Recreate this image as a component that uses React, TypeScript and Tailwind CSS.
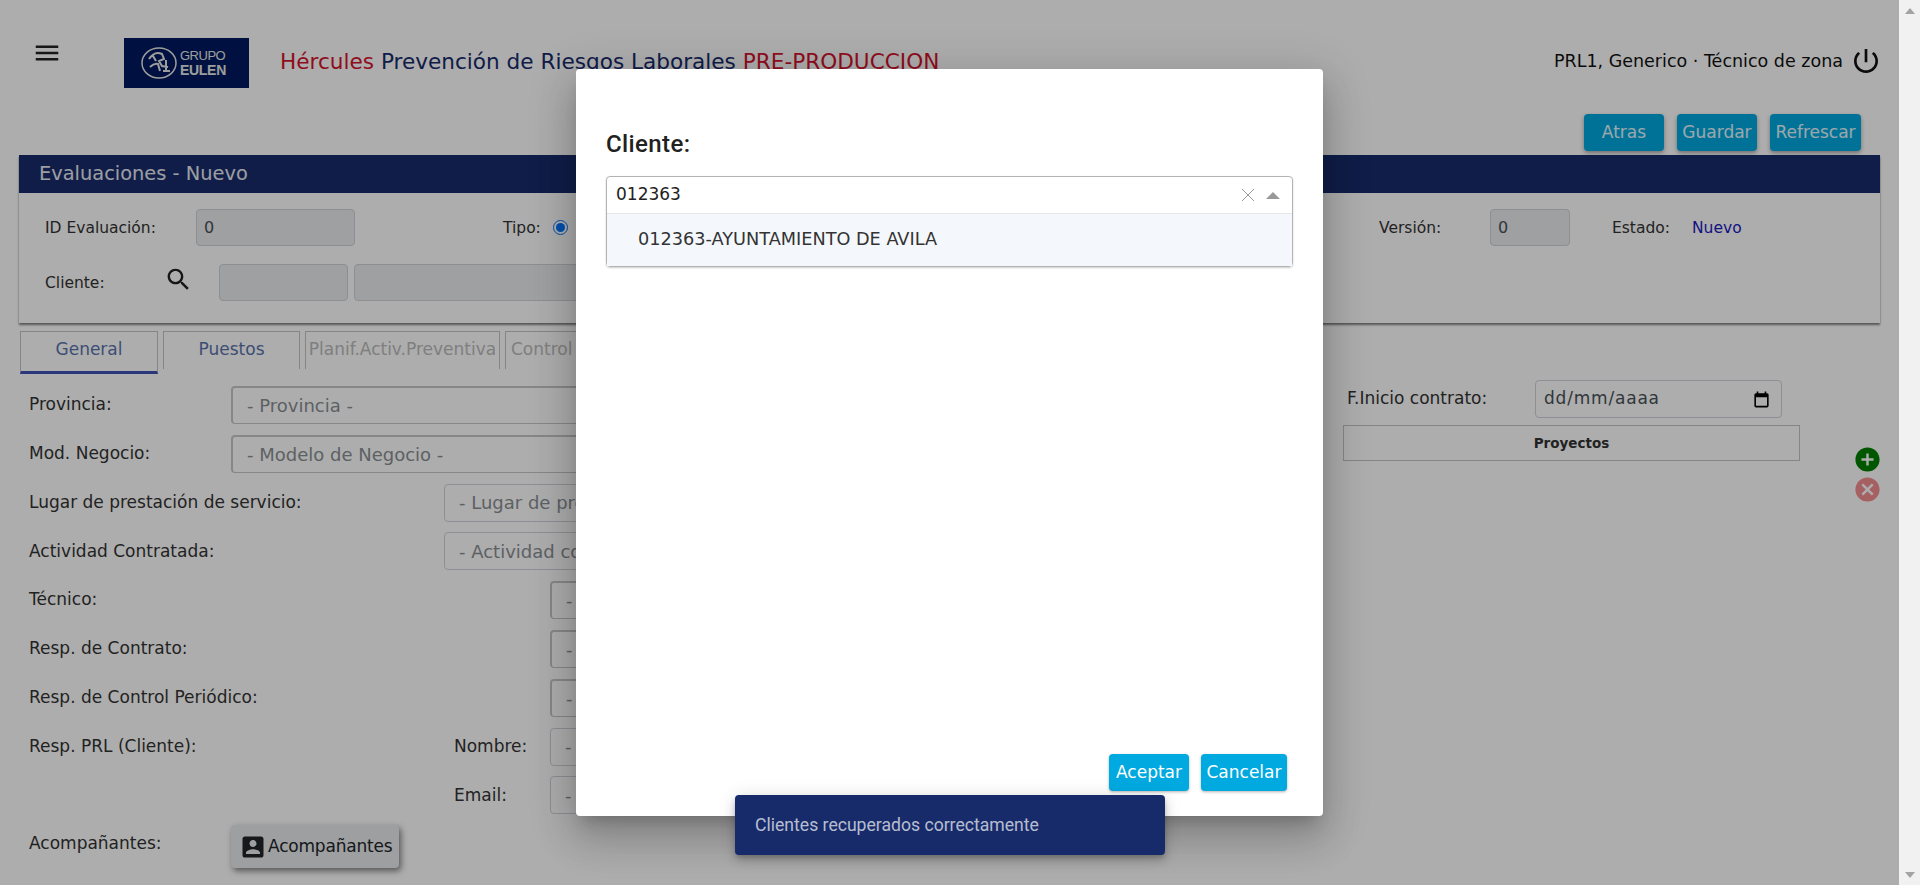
const ui = { fontFamily: '"DejaVu Sans", sans-serif' };

function Icon({ d, className }: { d: string; className?: string }) {
  return (
    <svg viewBox="0 0 24 24" fill="currentColor" className={className}>
      <path d={d} />
    </svg>
  );
}

const icons = {
  menu: "M3 18h18v-2H3v2zm0-5h18v-2H3v2zm0-7v2h18V6H3z",
  search:
    "M15.5 14h-.79l-.28-.27C15.41 12.59 16 11.11 16 9.5 16 5.91 13.09 3 9.5 3S3 5.91 3 9.5 5.91 16 9.5 16c1.61 0 3.09-.59 4.23-1.57l.27.28v.79l5 4.99L20.49 19l-4.99-5zm-6 0C7.01 14 5 11.99 5 9.5S7.01 5 9.5 5 14 7.01 14 9.5 11.99 14 9.5 14z",
  person:
    "M3 5v14c0 1.1.89 2 2 2h14c1.1 0 2-.9 2-2V5c0-1.1-.9-2-2-2H5c-1.11 0-2 .9-2 2zm12 4c0 1.66-1.34 3-3 3s-3-1.34-3-3 1.34-3 3-3 3 1.34 3 3zm-9 8c0-2 4-3.1 6-3.1s6 1.1 6 3.1v1H6v-1z",
  power:
    "M13 3h-2v10h2V3zm4.83 2.17l-1.42 1.42C17.99 7.86 19 9.81 19 12c0 3.87-3.13 7-7 7s-7-3.13-7-7c0-2.19 1.01-4.14 2.58-5.42L6.17 5.17C4.23 6.82 3 9.26 3 12c0 4.97 4.03 9 9 9s9-4.03 9-9c0-2.74-1.23-5.18-3.17-6.83z",
  add: "M12 2C6.48 2 2 6.48 2 12s4.48 10 10 10 10-4.48 10-10S17.52 2 12 2zm5 11h-4v4h-2v-4H7v-2h4V7h2v4h4v2z",
  cancel:
    "M12 2C6.47 2 2 6.47 2 12s4.47 10 10 10 10-4.47 10-10S17.53 2 12 2zm5 13.59L15.59 17 12 13.41 8.41 17 7 15.59 10.59 12 7 8.41 8.41 7 12 10.59 15.59 7 17 8.41 13.41 12 17 15.59z",
  calendar:
    "M19 4h-1V2h-2v2H8V2H6v2H5c-1.1 0-2 .9-2 2v14c0 1.1.9 2 2 2h14c1.1 0 2-.9 2-2V6c0-1.1-.9-2-2-2zm0 16H5V9h14v11z",
};

function Logo() {
  return (
    <div className="w-[125px] h-[50px] bg-[#001a60] flex items-center pl-[17px] gap-[3px] text-[#e8e8e8]">
      <svg viewBox="0 0 36 32" className="w-[36px] h-[32px]" fill="none" stroke="currentColor">
        <ellipse cx="18" cy="16" rx="17" ry="15" strokeWidth="1.5" />
        <path d="M8 12c4-6 9-7 13-5l2 5-5 2 3 5 6 1M9 20c3-3 5-4 8-3l2 7M12 9l3 5M25 13v10M22 24h7" strokeWidth="2" />
      </svg>
      <div className="flex flex-col leading-[14px]" style={{ fontFamily: '"Liberation Sans", sans-serif' }}>
        <span className="text-[13px] tracking-[-0.5px]">GRUPO</span>
        <span className="text-[14px] font-bold tracking-[-0.3px]">EULEN</span>
      </div>
    </div>
  );
}

function TopButton({ label, width }: { label: string; width: string }) {
  return (
    <button className={`${width} h-[37px] rounded bg-[#00a9e0] text-white/90 text-[17px] shadow-[0_2px_4px_rgba(0,0,0,0.35)]`}>
      {label}
    </button>
  );
}

function ReadOnly({ value, className }: { value?: string; className: string }) {
  return (
    <div className={`${className} h-[37px] shrink-0 flex items-center px-[7px] rounded bg-[#e9ecef] border border-[#ced4da] text-[#495057] text-[16px]`}>
      {value}
    </div>
  );
}

function Tab({ label, className, active, disabled }: { label: string; className: string; active?: boolean; disabled?: boolean }) {
  return (
    <div
      className={`${className} flex justify-center pt-[5px] overflow-hidden whitespace-nowrap border-x border-t border-[#c4c4c4] text-[17px] ${
        active ? "border-b-[3px] border-b-[#3f51b5] h-[43px] text-[#5a73ad]" : disabled ? "text-[#bbbbbb] h-[38px]" : "text-[#5a73ad] h-[38px]"
      }`}
    >
      {label}
    </div>
  );
}

function Row({ label, labelWidth, placeholder, inner, thick }: { label: string; labelWidth: string; placeholder: string; inner?: string; thick?: boolean }) {
  return (
    <div className="flex h-[38px] items-center">
      <span className={`${labelWidth} shrink-0 flex justify-between`}>
        <span>{label}</span>
        {inner && <span className="w-[96px]">{inner}</span>}
      </span>
      <div className={`w-[700px] h-full flex items-center rounded border px-[14px] text-[18px] text-[#8a8f94] ${thick ? "border-[#c8c8cc] border-t-2 border-l-2" : "border-[#ced4da]"}`}>{placeholder}</div>
    </div>
  );
}

export default function App() {
  return (
    <div className="flex h-screen overflow-hidden bg-[#f1f1f1]" style={ui}>
      <div className="relative flex-1 min-w-0 bg-white text-[#212529] text-[17px] overflow-hidden">
        {/* header */}
        <div className="flex items-start pt-[38px] pr-[17px] h-[114px]">
          <Icon d={icons.menu} className="w-[30px] h-[30px] ml-[32px] text-[#222]" />
          <div className="ml-[62px]">
            <Logo />
          </div>
          <div className="ml-[31px] mt-[8px] text-[21.6px] text-[#172b6b] whitespace-nowrap">
            <span className="text-[#d5132d]">Hércules</span> Prevención de Riesgos Laborales{" "}
            <span className="text-[#d5132d]">PRE-PRODUCCION</span>
          </div>
          <div className="ml-auto flex items-center mt-[7px] text-[17.5px] text-[#111]">
            <span>PRL1, Generico · Técnico de zona</span>
            <Icon d={icons.power} className="w-[32px] h-[32px] ml-[7px]" />
          </div>
        </div>

        {/* acciones */}
        <div className="flex justify-end gap-[13px] pr-[38px] h-[41px]">
          <TopButton label="Atras" width="w-[80px]" />
          <TopButton label="Guardar" width="w-[80px]" />
          <TopButton label="Refrescar" width="w-[91px]" />
        </div>

        {/* cabecera de evaluacion */}
        <div className="mx-[19px] shadow-[0_2px_2px_rgba(0,0,0,0.5)]">
          <div className="h-[38px] bg-[#172b6b] text-white/90 text-[19.4px] flex items-center pl-[20px]">Evaluaciones - Nuevo</div>
          <div className="h-[130px] pt-[16px] pl-[26px] flex flex-col gap-[18px] text-[#333] text-[15.5px]">
            <div className="flex items-center">
              <span className="w-[151px] pt-[2px]">ID Evaluación:</span>
              <ReadOnly value="0" className="w-[159px]" />
              <span className="ml-[148px] w-[50px] pt-[2px]">Tipo:</span>
              <input type="radio" defaultChecked className="w-[15px] h-[15px] accent-[#0075ff]" />
              <span className="ml-auto w-[111px] pt-[2px]">Versión:</span>
              <ReadOnly value="0" className="w-[80px]" />
              <span className="ml-[42px] w-[80px] pt-[2px]">Estado:</span>
              <span className="text-[#1a1ac0] mr-[139px] w-[49px] pt-[2px]">Nuevo</span>
            </div>
            <div className="flex items-center">
              <span className="w-[119px] pt-[2px]">Cliente:</span>
              <Icon d={icons.search} className="w-[29px] h-[29px] -mt-[6px] text-[#222]" />
              <ReadOnly className="ml-[26px] w-[129px]" />
              <ReadOnly className="ml-[6px] w-[600px]" />
            </div>
          </div>
        </div>

        {/* pestañas */}
        <div className="flex items-start gap-[5px] mt-[8px] ml-[20px] h-[47px]">
          <Tab label="General" className="w-[138px]" active />
          <Tab label="Puestos" className="w-[137px]" />
          <Tab label="Planif.Activ.Preventiva" className="w-[195px]" disabled />
          <Tab label="Control" className="w-[120px] justify-start pl-[5px]" disabled />
        </div>

        {/* formulario */}
        <div className="flex mt-[8px] text-[#333]">
          <div className="ml-[29px] w-[1280px] shrink-0 flex flex-col gap-[10.8px]">
            <Row label="Provincia:" labelWidth="w-[202px]" placeholder="- Provincia -" thick />
            <Row label="Mod. Negocio:" labelWidth="w-[202px]" placeholder="- Modelo de Negocio -" thick />
            <Row label="Lugar de prestación de servicio:" labelWidth="w-[415px]" placeholder="- Lugar de prestación -" />
            <Row label="Actividad Contratada:" labelWidth="w-[415px]" placeholder="- Actividad contratada -" />
            <Row label="Técnico:" labelWidth="w-[521px]" placeholder="-" thick />
            <Row label="Resp. de Contrato:" labelWidth="w-[521px]" placeholder="-" thick />
            <Row label="Resp. de Control Periódico:" labelWidth="w-[521px]" placeholder="-" thick />
            <Row label="Resp. PRL (Cliente):" labelWidth="w-[521px]" placeholder="-" inner="Nombre:" />
            <Row label="" labelWidth="w-[521px]" placeholder="-" inner="Email:" />
            <div className="flex items-center h-[38px]">
              <span className="w-[202px]">Acompañantes:</span>
              <button className="w-[168px] h-[43px] mt-[5px] flex items-center pl-[10px] bg-[#e9eaec] text-[#212529] shadow-[2px_3px_6px_rgba(0,0,0,0.5)] rounded-sm">
                <Icon d={icons.person} className="w-[28px] h-[28px] -ml-[2px]" />
                <span className="ml-[1px] -tracking-[0.2px]">Acompañantes</span>
              </button>
            </div>
          </div>
          <div className="ml-[34px] w-[457px] shrink-0 -mt-[6px]">
            <div className="flex items-center h-[38px] pl-[4px]">
              <span className="w-[188px]">F.Inicio contrato:</span>
              <div className="w-[247px] h-full rounded border border-[#ced4da] flex items-center justify-between pl-[8px] pr-[10px] text-[#495057]">
                <span className="tracking-[0.8px]">dd/mm/aaaa</span>
                <Icon d={icons.calendar} className="w-[19px] h-[19px] text-black" />
              </div>
            </div>
            <div className="mt-[7px] h-[36px] border border-[#c4c4c4] flex items-center justify-center text-[13.5px] font-bold">Proyectos</div>
          </div>
          <div className="ml-[55px] pt-[61px] flex flex-col gap-[5px] shrink-0">
            <Icon d={icons.add} className="w-[29px] h-[29px] -m-[2px] text-[#008000]" />
            <Icon d={icons.cancel} className="w-[29px] h-[29px] -m-[2px] text-[#f4908f]" />
          </div>
        </div>

        {/* capa del dialogo */}
        <div className="absolute inset-0 bg-black/32" />

        <div
          className="absolute left-[576px] top-[69px] w-[747px] h-[747px] bg-white rounded flex flex-col px-[30px] pb-[25px] shadow-[0_11px_15px_-7px_rgba(0,0,0,0.2),0_24px_38px_3px_rgba(0,0,0,0.14),0_9px_46px_8px_rgba(0,0,0,0.12)]"
          style={{ fontFamily: "Roboto, sans-serif" }}
        >
          <h2 className="mt-[60px] text-[24px] leading-[30px] tracking-[0.4px] font-medium text-[#212121]">Cliente:</h2>
          <div className="mt-[17px] rounded border border-[#b3b3b3] shadow-[0_1px_2px_rgba(0,0,0,0.2)]" style={ui}>
            <div className="h-[37px] flex items-center pl-[9px] pr-[12px] text-[17px] text-[#222] border-b border-[#e6e6e6]">
              <span>012363</span>
              <svg viewBox="0 0 14 14" className="ml-auto w-[16px] h-[14px] text-[#999]" fill="none" stroke="currentColor" strokeWidth="1">
                <path d="M1 1l12 12M13 1L1 13" />
              </svg>
              <span className="ml-[10px] w-0 h-0 border-x-[7px] border-x-transparent border-b-[7px] border-b-[#999]" />
            </div>
            <div className="h-[52px] flex items-center pl-[31px] pb-[2px] bg-[#f4f8fc] text-[17.7px] text-[#333]">012363-AYUNTAMIENTO DE AVILA</div>
          </div>
          <div className="mt-auto flex justify-end gap-[12px] pr-[6px]">
            <button className="w-[80px] h-[37px] rounded bg-[#00a9e0] text-white text-[17px] shadow-[0_1px_3px_rgba(0,0,0,0.3)]" style={ui}>Aceptar</button>
            <button className="w-[86px] h-[37px] rounded bg-[#00a9e0] text-white text-[17px] shadow-[0_1px_3px_rgba(0,0,0,0.3)]" style={ui}>Cancelar</button>
          </div>
        </div>

        {/* aviso */}
        <div
          className="absolute left-[735px] top-[795px] w-[430px] h-[60px] pt-[1px] rounded bg-[#172b6b] text-white/70 text-[17.6px] flex items-center pl-[20px] shadow-[0_3px_5px_-1px_rgba(0,0,0,0.2),0_6px_10px_0_rgba(0,0,0,0.14),0_1px_18px_0_rgba(0,0,0,0.12)]"
          style={{ fontFamily: "Roboto, sans-serif" }}
        >
          Clientes recuperados correctamente
        </div>
      </div>

      {/* barra de scroll */}
      <div className="w-[21px] shrink-0 flex flex-col items-center justify-between pt-[8px] pb-[7px]">
        <span className="w-0 h-0 border-x-[5px] border-x-transparent border-b-[6px] border-b-[#a3a3a3]" />
        <span className="w-0 h-0 border-x-[5px] border-x-transparent border-t-[6px] border-t-[#a3a3a3]" />
      </div>
    </div>
  );
}
